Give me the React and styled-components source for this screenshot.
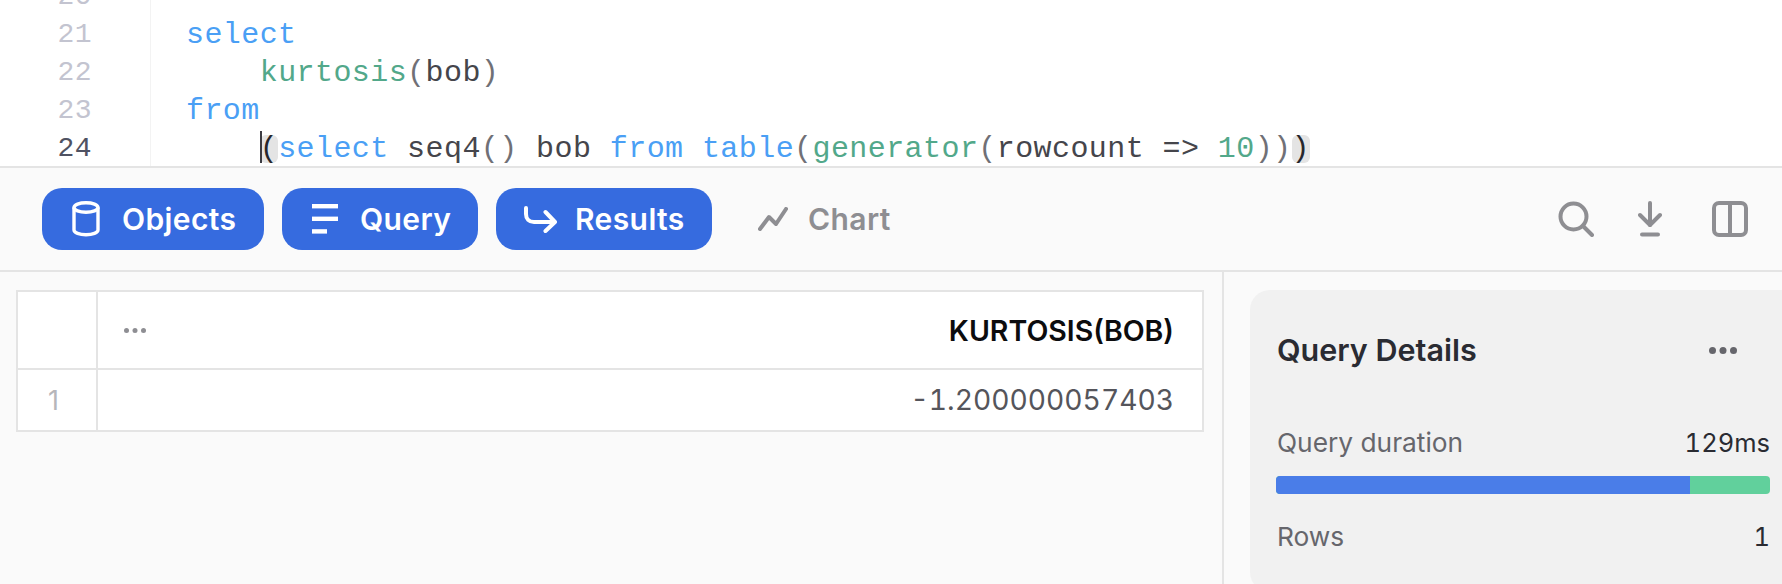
import styled, { createGlobalStyle } from 'styled-components';

const GlobalStyle = createGlobalStyle`
  html, body {
    margin: 0;
    padding: 0;
    background: #fafafa;
  }
  body {
    width: 1782px;
    height: 584px;
    overflow: hidden;
    font-family: Inter, "Liberation Sans", sans-serif;
  }
`;

const Page = styled.div`
  width: 1782px;
  height: 584px;
  display: flex;
  flex-direction: column;
  overflow: hidden;
`;

const Editor = styled.div`
  height: 166px;
  flex: none;
  background: #fff;
  border-bottom: 2px solid #e4e4e4;
  overflow: hidden;
  display: flex;
`;

const Gutter = styled.div`
  width: 151px;
  flex: none;
  box-sizing: border-box;
  border-right: 1px solid #f3f3f3;
  padding-right: 58px;
  margin-top: -22px;
  text-align: right;
`;

const LineNo = styled.div`
  height: 38px;
  font: 400 28px/38px "Liberation Mono", monospace;
  letter-spacing: 0.4px;
  color: ${props => (props.$active ? '#4f5262' : '#c3c4d0')};
`;

const Code = styled.div`
  margin-top: -22px;
  padding-left: 35px;
`;

const CodeLine = styled.div`
  height: 38px;
  font: 400 30px/38px "Liberation Mono", monospace;
  letter-spacing: 0.42px;
  white-space: pre;
  color: #45454b;
`;

const Kw = styled.span`
  color: #4a9ff5;
`;

const Fn = styled.span`
  color: #52a88a;
`;

const Paren = styled.span`
  color: #707076;
`;

const Match = styled.span`
  display: inline-block;
  height: 28px;
  line-height: 28px;
  background: #e4e4e4;
  border-radius: 6px;
  color: #26262b;
  position: relative;
`;

const Caret = styled.span`
  position: absolute;
  left: 0;
  top: -4px;
  width: 2px;
  height: 32px;
  background: #3c3c42;
`;

const Toolbar = styled.div`
  height: 104px;
  flex: none;
  box-sizing: border-box;
  border-bottom: 2px solid #e4e4e4;
  padding: 20px 34px 0 42px;
  display: flex;
  align-items: flex-start;
  gap: 18px;
`;

const TabButton = styled.div`
  height: 62px;
  width: ${props => props.$width}px;
  box-sizing: border-box;
  padding-left: ${props => props.$pad}px;
  display: flex;
  align-items: center;
  gap: ${props => props.$gap}px;
  border-radius: 20px;
  background: ${props => (props.$on ? '#366bdf' : 'transparent')};
  color: ${props => (props.$on ? '#fff' : '#8e8e92')};
  font-size: 30px;
  font-weight: 600;
  letter-spacing: 0.4px;
`;

const ToolIcons = styled.div`
  margin-left: auto;
  height: 62px;
  display: flex;
  align-items: center;
  gap: 44px;
`;

const DownloadSlot = styled.div`
  display: flex;
  margin-right: 6px;
`;

const Body = styled.div`
  flex: 1;
  display: flex;
  min-height: 0;
`;

const ResultsPane = styled.div`
  width: 1224px;
  flex: none;
  box-sizing: border-box;
  padding: 18px 18px 0 16px;
  border-right: 2px solid #e4e4e4;
`;

const Grid = styled.div`
  display: grid;
  grid-template-columns: 80px 1fr;
  grid-template-rows: 78px 60px;
  border: 2px solid #e4e4e4;
  background: #fff;
`;

const RowHead = styled.div`
  border-right: 2px solid #e4e4e4;
  border-bottom: ${props => (props.$top ? '2px solid #e4e4e4' : 'none')};
  display: flex;
  align-items: center;
  padding-left: 30px;
  font-size: 27px;
  color: #b6b6ba;
`;

const HeaderCell = styled.div`
  border-bottom: 2px solid #e4e4e4;
  padding: 0 28px 0 26px;
  display: flex;
  align-items: center;
  justify-content: space-between;
`;

const ColumnName = styled.span`
  font-size: 28.500px;
  font-weight: 600;
  color: #0c0c0e;
`;

const ValueCell = styled.div`
  padding: 0 28px 0 26px;
  display: flex;
  align-items: center;
  justify-content: flex-end;
  font-size: 28.200px;
  font-variant-numeric: tabular-nums;
  color: #55555b;
`;

const Side = styled.div`
  flex: 1;
  padding: 18px 0 0 26px;
  min-width: 0;
`;

const DetailsCard = styled.div`
  height: 302px;
  box-sizing: border-box;
  background: #f1f1f1;
  border-radius: 20px 0 0 20px;
  padding: 43px 12px 0 27px;
`;

const CardHead = styled.div`
  display: flex;
  align-items: center;
  justify-content: space-between;
  padding-right: 33px;
  margin-bottom: 60px;
`;

const CardTitle = styled.h3`
  margin: 0;
  font-size: 30.500px;
  line-height: 34px;
  font-weight: 600;
  color: #2a2b32;
`;

const StatRow = styled.div`
  display: flex;
  justify-content: space-between;
  font-size: 26.300px;
  line-height: 32px;
`;

const StatLabel = styled.span`
  color: #66666c;
`;

const StatValue = styled.span`
  color: #2a2b32;
  font-size: 25.500px;
  font-variant-numeric: tabular-nums;
`;

const Bar = styled.div`
  height: 18px;
  margin: 17px 0 27px -1px;
  border-radius: 4px;
  overflow: hidden;
  display: flex;
  background: #61d09c;
`;

const BarFill = styled.div`
  background: #4a7de8;
`;

const Dots = ({ color, size = 7, gap = 3.5 }) => (
  <svg width={size * 3 + gap * 2} height={size} viewBox={`0 0 ${size * 3 + gap * 2} ${size}`} fill={color}>
    {[0, 1, 2].map(i => (
      <circle key={i} cx={size / 2 + i * (size + gap)} cy={size / 2} r={size / 2} />
    ))}
  </svg>
);

const DbIcon = () => (
  <svg width="28" height="36" viewBox="0 0 28 36" fill="none" stroke="#fff" strokeWidth="3.4">
    <ellipse cx="14" cy="6.5" rx="12" ry="4.7" />
    <path d="M2 6.5v22.5c0 2.7 5.4 4.7 12 4.7s12-2 12-4.7V6.5" />
  </svg>
);

const LinesIcon = () => (
  <svg width="26" height="30" viewBox="0 0 26 30" fill="#fff">
    <rect x="0" y="0" width="26" height="4.4" />
    <rect x="0" y="12.6" width="26" height="4.4" />
    <rect x="0" y="25.2" width="15" height="4.4" />
  </svg>
);

const ReturnIcon = () => (
  <svg width="33" height="27" viewBox="0 0 33 27" fill="none" stroke="#fff" strokeWidth="4" strokeLinecap="round" strokeLinejoin="round">
    <path d="M2 2v6c0 5 3 8 8 8h20" />
    <path d="M21.5 6 31 16l-9.500 9" />
  </svg>
);

const ChartIcon = () => (
  <svg width="30" height="24" viewBox="0 0 30 24" fill="none" stroke="#8e8e92" strokeWidth="4" strokeLinecap="round" strokeLinejoin="round">
    <path d="M2 22 11 10l7 7L28 2" />
  </svg>
);

const SearchIcon = () => (
  <svg width="36" height="36" viewBox="0 0 36 36" fill="none" stroke="#8e8e92" strokeWidth="4" strokeLinecap="round">
    <circle cx="15.500" cy="15.500" r="13" />
    <path d="m25 25 9 9" />
  </svg>
);

const DownloadIcon = () => (
  <svg width="24" height="36" viewBox="0 0 24 36" fill="none" stroke="#8e8e92" strokeWidth="4" strokeLinecap="round" strokeLinejoin="round">
    <path d="M12 2v22" />
    <path d="m2 14 10 10 10-10" />
    <path d="M4 33.500h16" />
  </svg>
);

const PanelIcon = () => (
  <svg width="36" height="36" viewBox="0 0 36 36" fill="none" stroke="#8e8e92" strokeWidth="4">
    <rect x="2" y="2" width="32" height="32" rx="5" />
    <path d="M18 2v32" />
  </svg>
);

const App = () => (
  <Page>
    <GlobalStyle />
    <Editor>
      <Gutter>
        {[20, 21, 22, 23, 24].map(n => (
          <LineNo key={n} $active={n === 24}>{n}</LineNo>
        ))}
      </Gutter>
      <Code>
        <CodeLine> </CodeLine>
        <CodeLine><Kw>select</Kw></CodeLine>
        <CodeLine>{'    '}<Fn>kurtosis</Fn><Paren>(</Paren>bob<Paren>)</Paren></CodeLine>
        <CodeLine><Kw>from</Kw></CodeLine>
        <CodeLine>
          {'    '}
          <Match><Caret />(</Match>
          <Kw>select</Kw> seq4<Paren>()</Paren> bob <Kw>from</Kw> <Kw>table</Kw><Paren>(</Paren>
          <Fn>generator</Fn><Paren>(</Paren>rowcount =&gt; <Fn>10</Fn><Paren>))</Paren>
          <Match>)</Match>
        </CodeLine>
      </Code>
    </Editor>

    <Toolbar>
      <TabButton $on $width={222} $pad={30} $gap={22}><DbIcon />Objects</TabButton>
      <TabButton $on $width={196} $pad={30} $gap={22}><LinesIcon />Query</TabButton>
      <TabButton $on $width={216} $pad={28} $gap={18}><ReturnIcon />Results</TabButton>
      <TabButton $width={180} $pad={28} $gap={20}><ChartIcon />Chart</TabButton>
      <ToolIcons>
        <SearchIcon />
        <DownloadSlot><DownloadIcon /></DownloadSlot>
        <PanelIcon />
      </ToolIcons>
    </Toolbar>

    <Body>
      <ResultsPane>
        <Grid>
          <RowHead $top />
          <HeaderCell>
            <Dots color="#8e8e93" size={5} gap={3.5} />
            <ColumnName>KURTOSIS(BOB)</ColumnName>
          </HeaderCell>
          <RowHead>1</RowHead>
          <ValueCell>-1.200000057403</ValueCell>
        </Grid>
      </ResultsPane>
      <Side>
        <DetailsCard>
          <CardHead>
            <CardTitle>Query Details</CardTitle>
            <Dots color="#66666c" />
          </CardHead>
          <StatRow>
            <StatLabel>Query duration</StatLabel>
            <StatValue>129ms</StatValue>
          </StatRow>
          <Bar>
            <BarFill style={{ width: `${(414 / 494) * 100}%` }} />
          </Bar>
          <StatRow>
            <StatLabel>Rows</StatLabel>
            <StatValue>1</StatValue>
          </StatRow>
        </DetailsCard>
      </Side>
    </Body>
  </Page>
);

export default App;
